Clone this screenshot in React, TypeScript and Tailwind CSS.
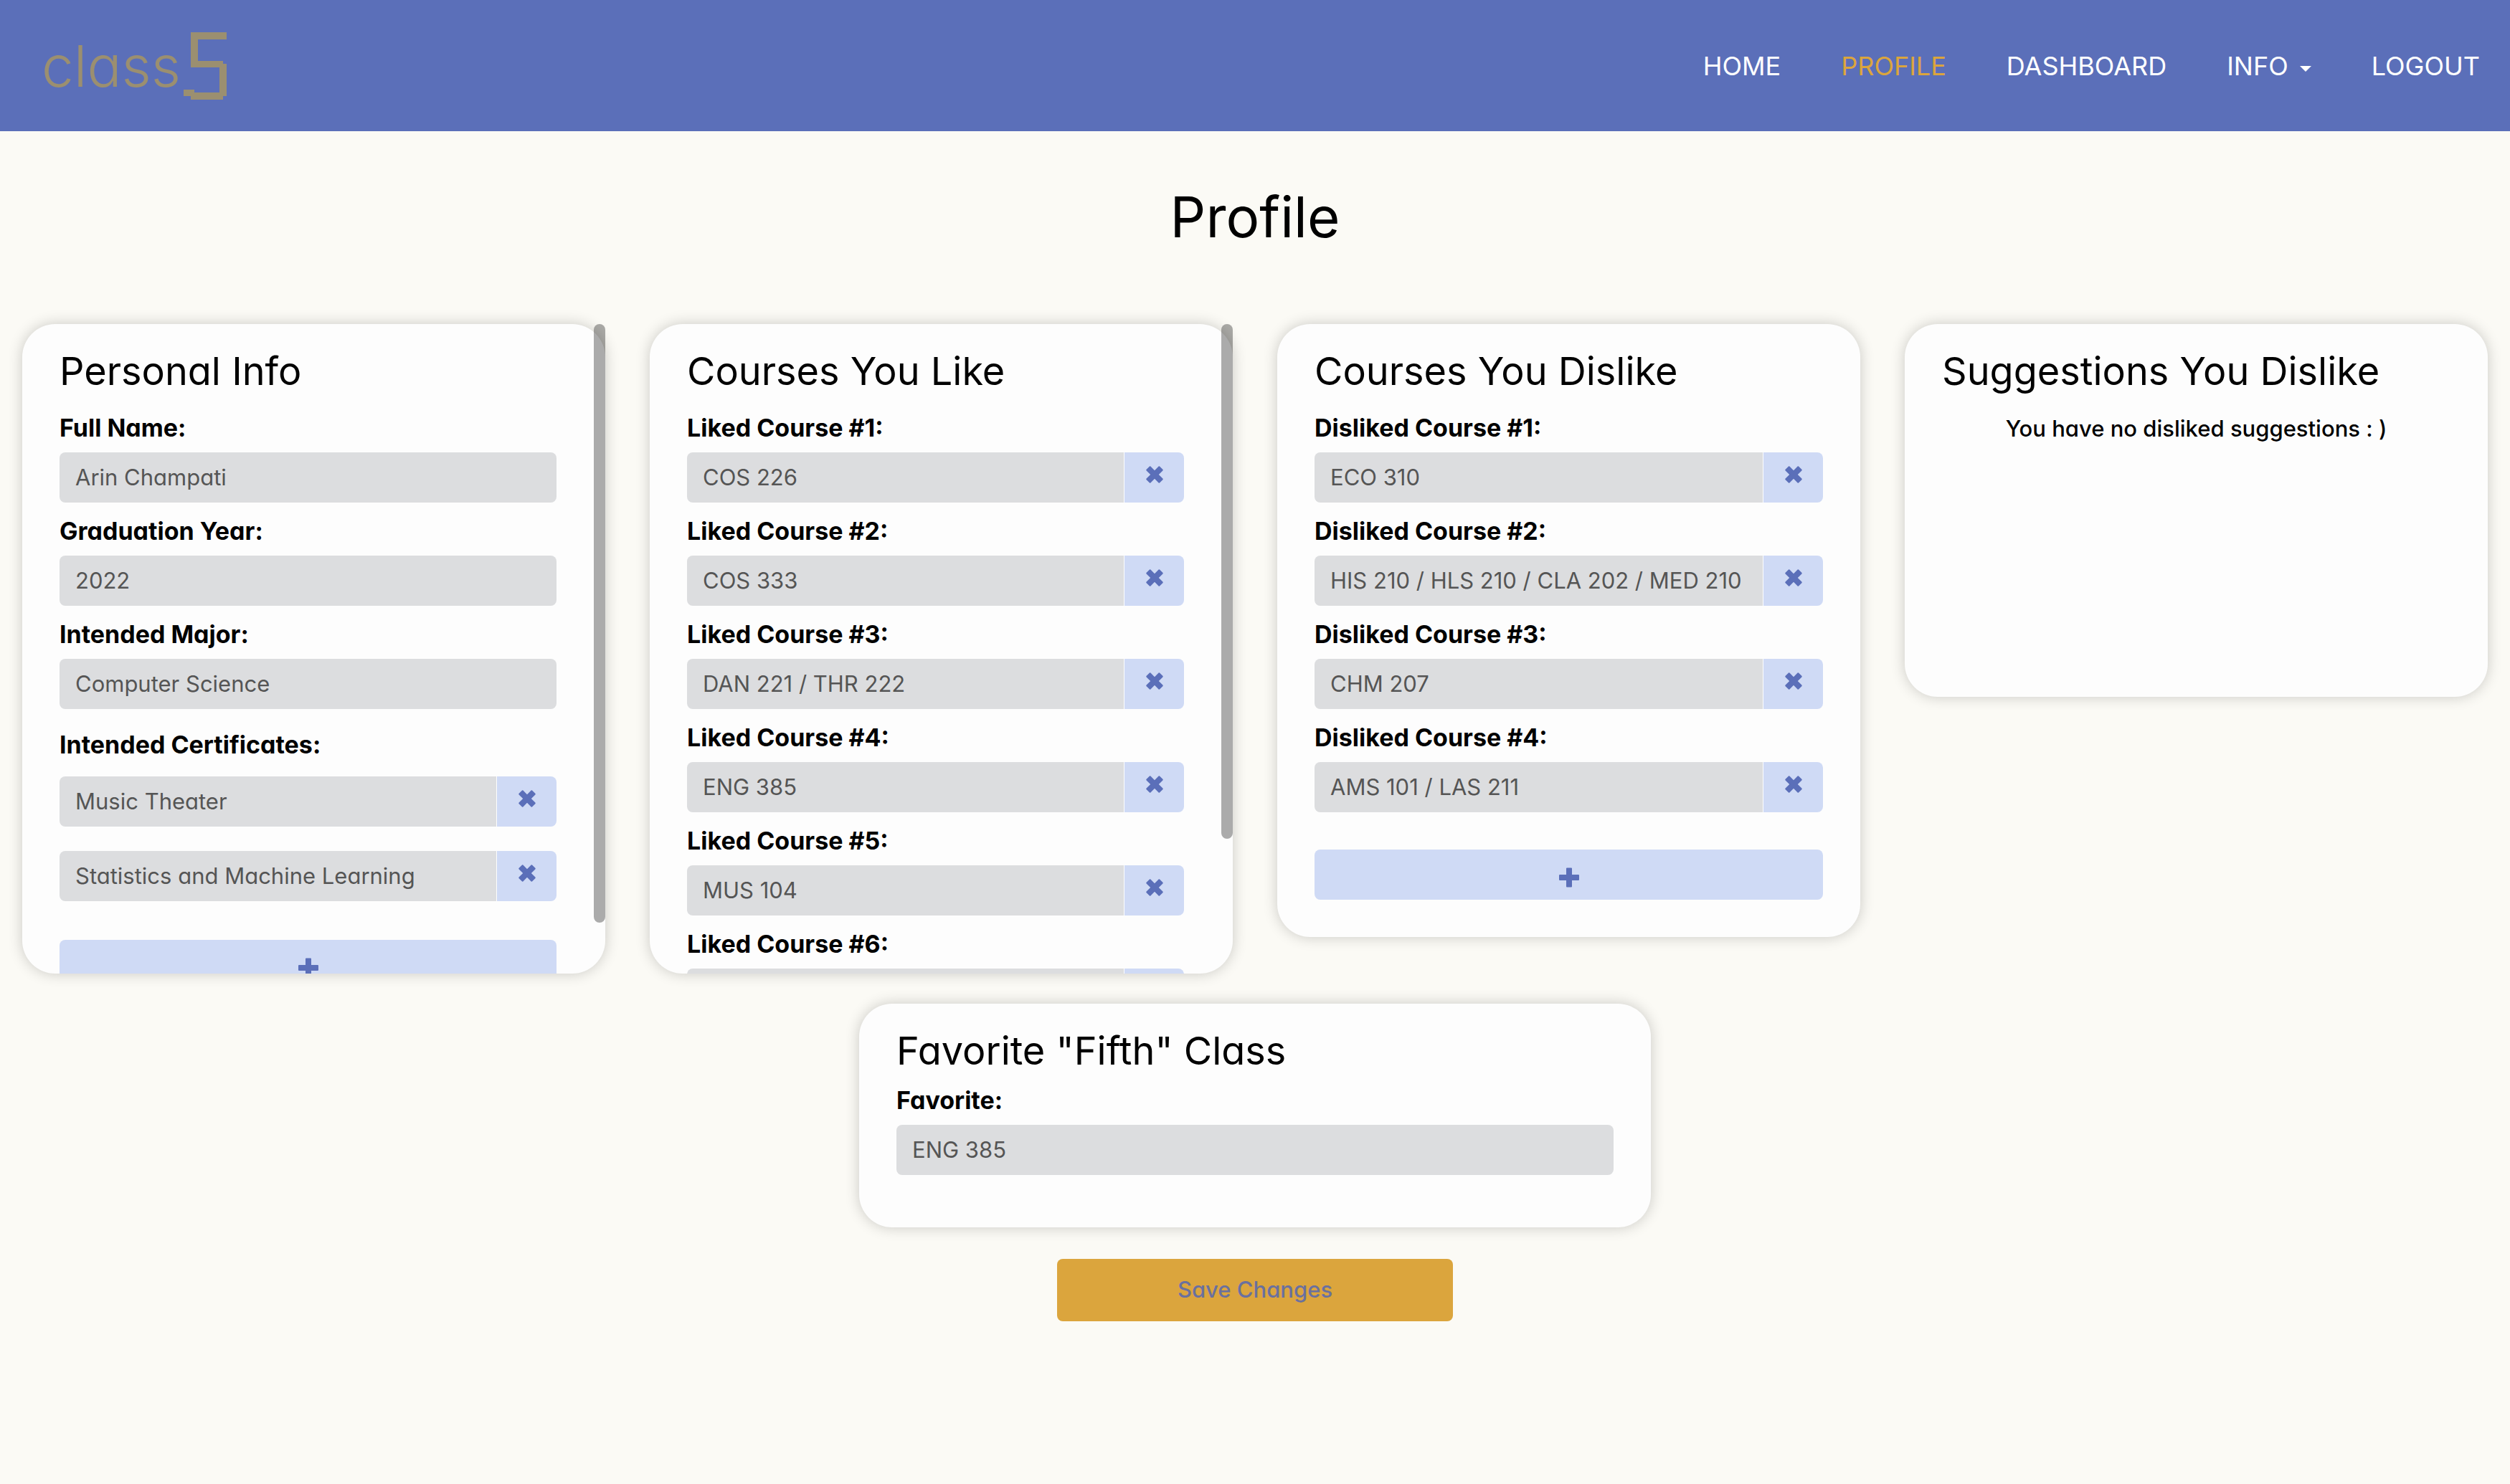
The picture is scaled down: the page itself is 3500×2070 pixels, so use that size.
import { ReactNode, useId } from "react";

function RemoveIcon() {
  return (
    <svg viewBox="0 0 24 24" className="h-6 w-6" fill="currentColor" aria-hidden="true">
      <path d="M5 0.400Q5.700 0 6.400 0.600L12 6.200L17.600 0.600Q18.300 0 19 0.400L23.600 5Q24 5.700 23.400 6.400L17.800 12L23.400 17.600Q24 18.300 23.600 19L19 23.600Q18.300 24 17.600 23.400L12 17.800L6.400 23.400Q5.700 24 5 23.600L0.400 19Q0 18.300 0.600 17.600L6.200 12L0.600 6.400Q0 5.700 0.400 5Z" />
    </svg>
  );
}

function PlusIcon() {
  return (
    <svg viewBox="0 0 28 28" className="h-7 w-7" fill="currentColor" aria-hidden="true">
      <path d="M11 0.500h6a1 1 0 0 1 1 1V10h9a1 1 0 0 1 1 1v6a1 1 0 0 1-1 1h-9v8.500a1 1 0 0 1-1 1h-6a1 1 0 0 1-1-1V18H1a1 1 0 0 1-1-1v-6a1 1 0 0 1 1-1h9V1.500a1 1 0 0 1 1-1z" />
    </svg>
  );
}

function Field({ label, value, removable = false }: { label?: string; value: string; removable?: boolean }) {
  const id = useId();
  return (
    <div>
      {label && (
        <label htmlFor={id} className="mb-3.5 block text-[34px] leading-10 font-bold">
          {label}
        </label>
      )}
      <div className="flex h-[70px] gap-px overflow-hidden rounded-lg">
        <input
          id={id}
          aria-label={label ? undefined : value}
          readOnly
          defaultValue={value}
          className="min-w-0 flex-1 bg-[#dcdddf] px-[22px] text-[31px] text-[#555555] outline-none"
        />
        {removable && (
          <button type="button" aria-label={`Remove ${value}`} className="flex w-[83px] items-center justify-center bg-[#cfdaf5] pb-2 text-[#5b6fb9]">
            <RemoveIcon />
          </button>
        )}
      </div>
    </div>
  );
}

function AddButton({ label }: { label: string }) {
  return (
    <button type="button" aria-label={label} className="mt-[52px] flex h-[70px] w-full items-center justify-center rounded-lg bg-[#cfdaf5] pt-2 text-[#5b6fb9]">
      <PlusIcon />
    </button>
  );
}

function Card({ title, thumb, size = "", children }: { title: string; thumb?: string; size?: string; children: ReactNode }) {
  return (
    <section className={`relative rounded-[46px] bg-[#fdfdfd] shadow-[0_0_20px_rgba(0,0,0,0.2)] ${size}`}>
      <div className={`max-h-[906px] overflow-y-auto rounded-[46px] px-[52px] pt-[34px] pb-[52px] [scrollbar-width:none] ${thumb ? "pr-[68px]" : ""}`}>
        <h2 className="text-[54px] leading-[64px]">{title}</h2>
        {children}
      </div>
      {thumb && <div className={`absolute top-0 right-0 w-4 rounded-full bg-black/32 ${thumb}`} />}
    </section>
  );
}

const liked = ["COS 226", "COS 333", "DAN 221 / THR 222", "ENG 385", "MUS 104", "MUS 105"];
const disliked = ["ECO 310", "HIS 210 / HLS 210 / CLA 202 / MED 210", "CHM 207", "AMS 101 / LAS 211"];

export default function App() {
  return (
    <div className="min-h-screen bg-[#fbfaf5] font-['Inter',sans-serif] text-black [font-feature-settings:'cv11','ss03']">
      <nav className="flex h-[183px] items-center justify-between bg-[#5b6fb9] pr-[42px] pl-[58px]">
        <a href="#home" aria-label="class5" className="flex items-center gap-1 text-[#9b8f70]">
          <span className="text-[80px] leading-none font-light">class</span>
          <svg viewBox="0 0 60 94" className="h-[94px] w-[60px]" fill="currentColor" aria-hidden="true">
            <path d="M10 0H60V10H20V40H55V44H60V89H55V94H10V89H0V80H15V84H50V49H10Z" />
          </svg>
        </a>
        <div className="flex items-center gap-[84px] text-[36px] text-white">
          <a href="#home">HOME</a>
          <a href="#profile" className="text-[#dba53d]">PROFILE</a>
          <a href="#dashboard">DASHBOARD</a>
          <button type="button" className="flex items-center gap-4">
            INFO
            <svg viewBox="0 0 16 8" className="mt-2 h-2 w-4" fill="currentColor" aria-hidden="true">
              <path d="M0 0H16L8 8Z" />
            </svg>
          </button>
          <a href="#logout">LOGOUT</a>
        </div>
      </nav>

      <h1 className="pt-[72px] pb-[101px] text-center text-[78px] leading-[96px]">Profile</h1>

      <main>
        <div className="grid grid-cols-4 items-start gap-[62px] px-[31px]">
          <Card title="Personal Info" thumb="h-[835px]">
            <div className="mt-[27px] flex flex-col gap-5">
              <Field label="Full Name:" value="Arin Champati" />
              <Field label="Graduation Year:" value="2022" />
              <Field label="Intended Major:" value="Computer Science" />
            </div>
            <h3 className="mt-[30px] mb-6 text-[34px] leading-10 font-bold">Intended Certificates:</h3>
            <div className="mb-[54px] flex flex-col gap-[34px]">
              <Field value="Music Theater" removable />
              <Field value="Statistics and Machine Learning" removable />
            </div>
            <AddButton label="Add certificate" />
          </Card>

          <Card title="Courses You Like" thumb="h-[718px]">
            <div className="mt-[27px] flex flex-col gap-5">
              {liked.map((course, i) => (
                <Field key={course} label={`Liked Course #${i + 1}:`} value={course} removable />
              ))}
            </div>
            <AddButton label="Add liked course" />
          </Card>

          <Card title="Courses You Dislike">
            <div className="mt-[27px] flex flex-col gap-5">
              {disliked.map((course, i) => (
                <Field key={course} label={`Disliked Course #${i + 1}:`} value={course} removable />
              ))}
            </div>
            <AddButton label="Add disliked course" />
          </Card>

          <Card title="Suggestions You Dislike" size="min-h-[520px]">
            <p className="mt-7 text-center text-[31px] leading-10 font-medium">You have no disliked suggestions : )</p>
          </Card>
        </div>

        <div className="mx-auto mt-[42px] w-[1104px] max-w-full">
          <Card title={'Favorite "Fifth" Class'} size="min-h-[312px]">
            <div className="mt-[17px]">
              <Field label="Favorite:" value="ENG 385" />
            </div>
          </Card>
        </div>

        <button type="button" className="mx-auto mt-11 block h-[87px] w-[552px] max-w-full rounded-lg bg-[#dba53d] text-[31px] font-medium text-[#6a709f]">
          Save Changes
        </button>
      </main>
    </div>
  );
}
